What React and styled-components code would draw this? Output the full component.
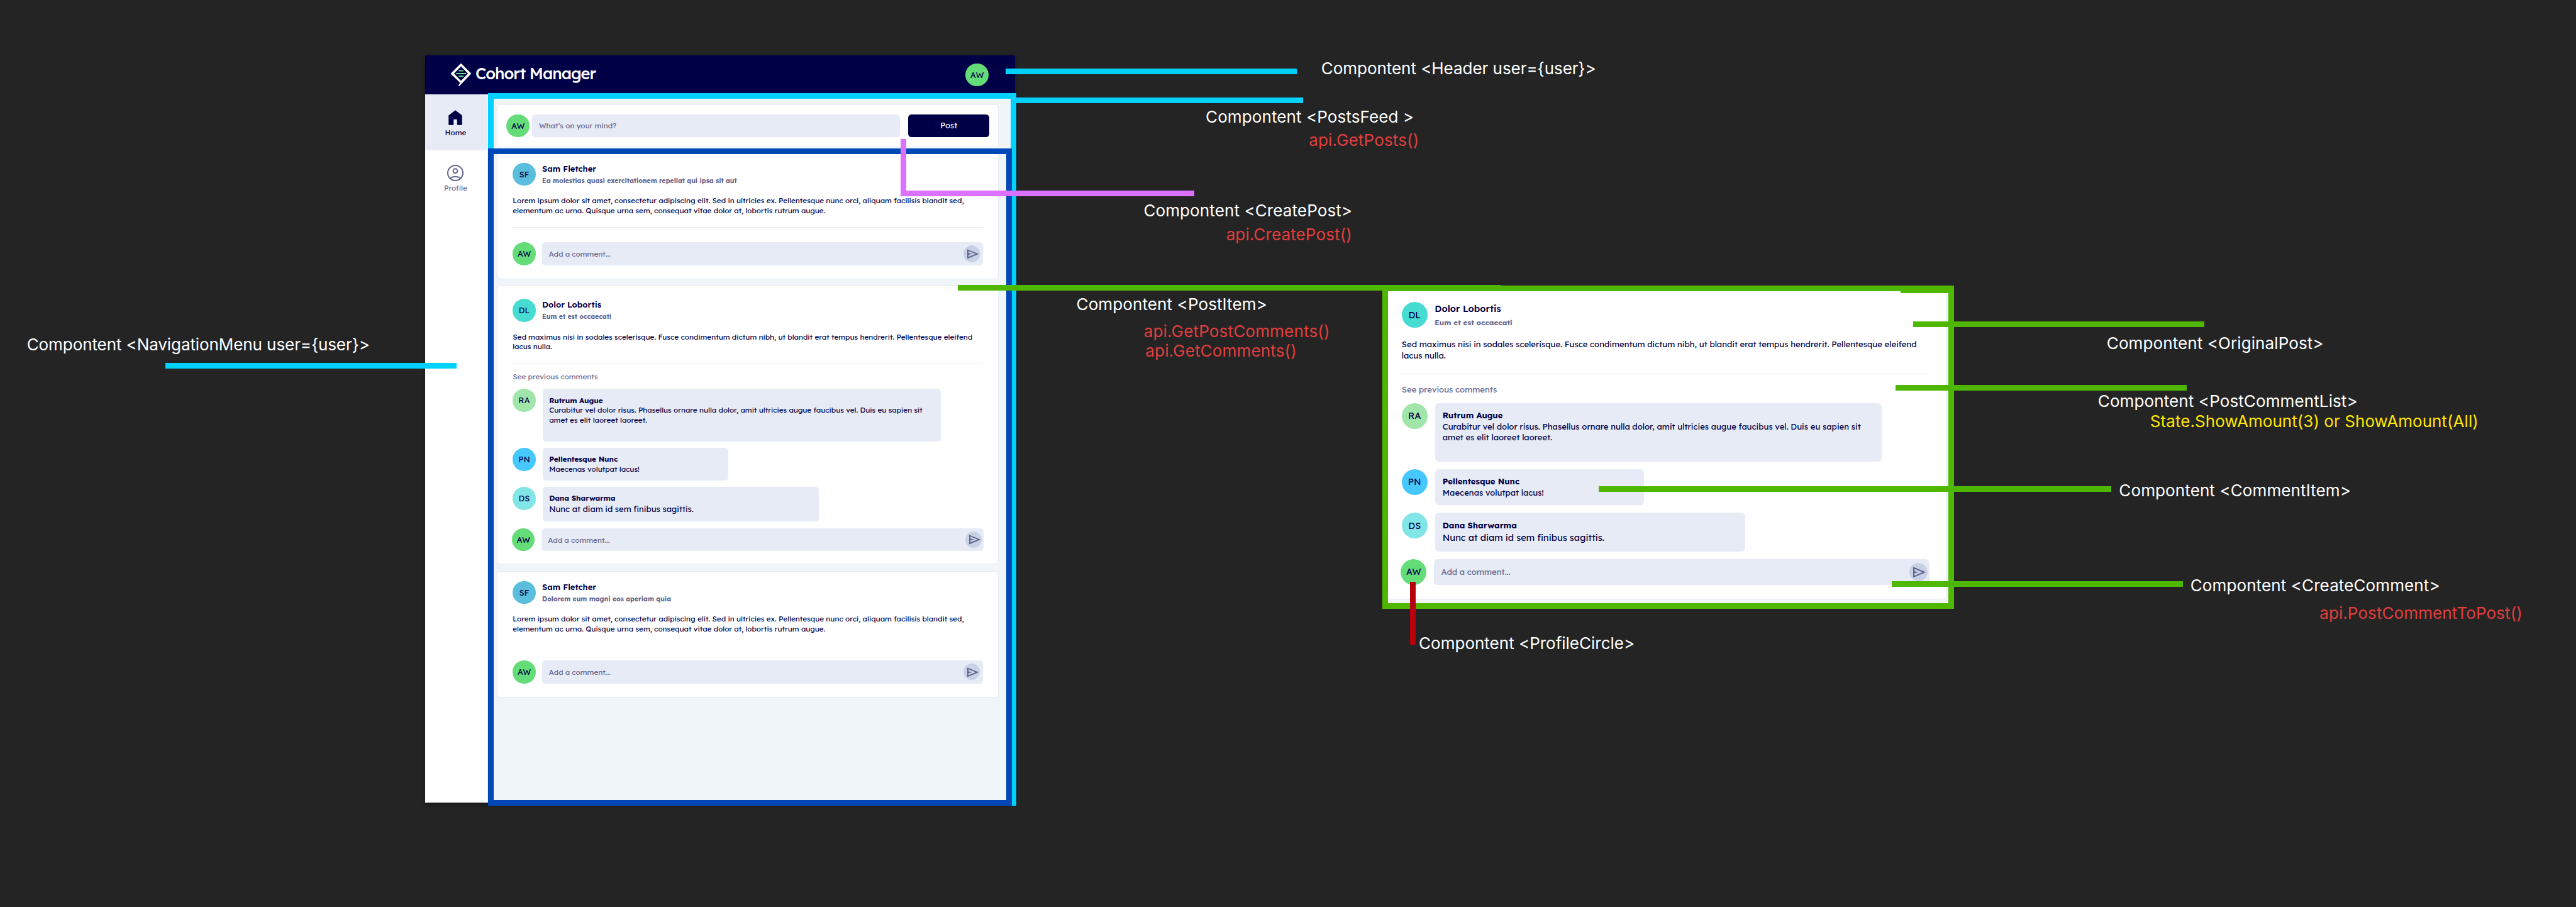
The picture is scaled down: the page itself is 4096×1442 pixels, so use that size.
import React from "react";
import styled, { createGlobalStyle } from "styled-components";

// One design unit; boards can override --u to show their content magnified.
const u = (n) => `calc(${n} * var(--u))`;

const color = {
  canvas: "#242424",
  navy: "#000046",
  muted: "#64648c",
  field: "#e6ebf5",
  feed: "#f0f5fa",
  send: "#c8d2e6",
  cyan: "#00d1ff",
  blue: "#0047b8",
  violet: "#db72ff",
  green: "#4fb700",
  crimson: "#b6000c",
  api: "#e23e3e",
  state: "#ffe500",
};

const people = {
  AW: "#64dc78",
  SF: "#5abedc",
  DL: "#46dcd2",
  RA: "#a0e6aa",
  PN: "#46c8ff",
  DS: "#82e6e6",
};

const GlobalStyle = createGlobalStyle`
  *, *::before, *::after { box-sizing: border-box; }
  html { --u: 0.6514px; }
  body { margin: 0; background: ${color.canvas}; }
  p, h1, h2 { margin: 0; }
`;

/* ---------- canvas ---------- */

const Canvas = styled.div`
  position: relative;
  width: 4096px;
  height: 1442px;
  overflow: hidden;
  background: ${color.canvas};
  color: ${color.navy};
  font-family: Lexend, Inter, "Open Sans", sans-serif;
`;

const AppFrame = styled.div`
  position: absolute;
  left: ${u(1037)};
  top: ${u(135)};
  width: ${u(1440)};
  height: ${u(1824)};
  display: flex;
  flex-direction: column;
  background: #fff;
  box-shadow: 0 ${u(4)} ${u(8)} rgba(0, 0, 0, 0.35);
`;

const Board = styled.div`
  position: absolute;
  left: ${u(3374)};
  top: ${u(697)};
  width: ${u(1395)};
  height: ${u(789)};
  overflow: hidden;
  background: ${color.feed};
`;

const Magnified = styled.div`
  --u: 0.73px;
  width: ${u(1225)};
  margin: 2.6px 0 0 3px;
`;

const Outline = styled.div`
  position: absolute;
  left: ${(p) => u(p.$x)};
  top: ${(p) => u(p.$y)};
  width: ${(p) => u(p.$w)};
  height: ${(p) => u(p.$h)};
  border: ${u(15)} solid ${(p) => p.$color};
`;

const Connector = styled.div`
  position: absolute;
  left: ${(p) => u(p.$x)};
  top: ${(p) => u(p.$y)};
  width: ${(p) => u(p.$w || 14)};
  height: ${(p) => u(p.$h || 14)};
  background: ${(p) => p.$color};
`;

const Label = styled.p`
  position: absolute;
  left: ${(p) => u(p.$x)};
  top: ${(p) => u(p.$baseline - 38.5)};
  font: 400 ${u(40)} / ${u(48)} Inter, sans-serif;
  letter-spacing: ${(p) => p.$track || 0}em;
  white-space: nowrap;
  color: ${(p) => p.$color || "#fff"};
`;

/* ---------- shared pieces ---------- */

const Circle = styled.span`
  flex: none;
  display: flex;
  align-items: center;
  justify-content: center;
  width: ${u(56)};
  height: ${u(56)};
  padding-top: ${u(1)};
  border-radius: 50%;
  background: ${(p) => p.$color};
  font-size: ${u(20)};
  line-height: 1;
`;

const ProfileCircle = ({ initials }) => (
  <Circle $color={people[initials]}>{initials}</Circle>
);

const Field = styled.div`
  flex: 1;
  display: flex;
  align-items: center;
  justify-content: space-between;
  height: ${u(56)};
  padding: 0 ${(p) => u(p.$inset ?? 8)} 0 ${u(16)};
  border-radius: ${u(8)};
  background: ${color.field};
  color: ${color.muted};
  font-size: ${u(18)};
  white-space: nowrap;
`;

const Card = styled.article`
  border: ${u(1)} solid ${color.field};
  border-radius: ${u(8)};
  background: #fff;
`;

/* ---------- header ---------- */

const HeaderBar = styled.header`
  flex: none;
  display: flex;
  align-items: center;
  justify-content: space-between;
  height: ${u(96)};
  padding: 0 ${u(64)};
  background: ${color.navy};
`;

const Brand = styled.div`
  display: flex;
  align-items: center;
  gap: ${u(10.5)};
`;

const BrandMark = styled.svg`
  width: ${u(49)};
  height: ${u(56)};
`;

const BrandName = styled.h1`
  padding-bottom: ${u(9)};
  color: #fff;
  font-size: ${u(39)};
  font-weight: 500;
  line-height: ${u(48)};
  letter-spacing: -0.04em;
  white-space: nowrap;
`;

const Header = () => (
  <HeaderBar>
    <Brand>
      <BrandMark viewBox="0 0 49 56">
        <path
          fill="#fff"
          fillRule="evenodd"
          d="M23.1.8Q24.6-.6 26.1.8L48.4 23.2Q49.6 24.6 48.4 26.2L19.6 56H18.3Q18.4 51.500 22.600 47.4L.7 26.200Q-.6 24.600 .7 23.200ZM24.6 6.800 7.600 24.600 24.600 42.300 41.600 24.600Z"
        />
        <g fill={people.AW}>
          <rect x="18.800" y="16" width="12.300" height="3.200" rx="1.600" />
          <rect x="12.500" y="22.900" width="25" height="3.300" rx="1.650" />
          <rect x="18.800" y="29.600" width="12.300" height="3.200" rx="1.600" />
        </g>
      </BrandMark>
      <BrandName>Cohort Manager</BrandName>
    </Brand>
    <ProfileCircle initials="AW" />
  </HeaderBar>
);

/* ---------- navigation ---------- */

const Columns = styled.div`
  flex: 1;
  display: flex;
  min-height: 0;
`;

const Nav = styled.nav`
  flex: none;
  width: ${u(152)};
  border-right: ${u(1)} solid ${color.field};
  background: #fff;
`;

const NavItem = styled.div`
  display: flex;
  flex-direction: column;
  align-items: center;
  gap: ${u(4)};
  height: ${u(136)};
  padding-top: ${u(36)};
  background: ${(p) => (p.$active ? color.field : "transparent")};
  color: ${(p) => (p.$active ? color.navy : color.muted)};
  font-size: ${u(18)};
  line-height: ${u(24)};
  letter-spacing: 0.005em;

  svg {
    width: ${u(40)};
    height: ${u(40)};
  }
`;

const NavigationMenu = () => (
  <Nav>
    <NavItem $active>
      <svg viewBox="0 0 40 40">
        <path fill="currentColor" d="M3.500 14.500 20 2 36.500 14.500V38H24.300V24H15.700V38H3.500Z" />
      </svg>
      Home
    </NavItem>
    <NavItem>
      <svg viewBox="0 0 40 40" fill="none" stroke="currentColor" strokeWidth="3">
        <circle cx="20" cy="20" r="18.500" />
        <circle cx="20" cy="15" r="5.300" />
        <path d="M6.500 33.500Q20 24 33.500 33.500" />
      </svg>
      Profile
    </NavItem>
  </Nav>
);

/* ---------- feed ---------- */

const Feed = styled.main`
  flex: 1;
  display: flex;
  flex-direction: column;
  padding: ${u(24)} ${u(39)} 0 ${u(24)};
  background: ${color.feed};
`;

const PostSlot = styled.div`
  margin-top: ${(p) => u(p.$gap)};
`;

const CreatePostCard = styled(Card)`
  display: flex;
  align-items: center;
  height: ${u(104)};
  padding: 0 ${u(21)} 0 ${u(22)};
`;

const PostField = styled(Field)`
  margin: 0 ${u(19)} 0 ${u(7)};
`;

const PostButton = styled.button`
  width: ${u(199)};
  height: ${u(56)};
  padding: 0;
  border: 0;
  border-radius: ${u(8)};
  background: ${color.navy};
  color: #fff;
  font: 400 ${u(20)} / 1 Lexend, Inter, sans-serif;
`;

const CreatePost = () => (
  <CreatePostCard>
    <ProfileCircle initials="AW" />
    <PostField>What’s on your mind?</PostField>
    <PostButton>Post</PostButton>
  </CreatePostCard>
);

/* ---------- post ---------- */

const PostCard = styled(Card)`
  padding: ${(p) => (p.$roomy ? `${u(31)} ${u(37)} ${u(30)}` : `${u(23)} ${u(37)} ${u(32)}`)};
`;

const PostHead = styled.header`
  display: flex;
  gap: ${u(16)};
  height: ${u(56)};
`;

const Author = styled.div`
  padding-top: ${u(2.5)};
  line-height: ${u(24)};
  white-space: nowrap;
`;

const AuthorName = styled.h2`
  font-size: ${u(20)};
  font-weight: 600;
  line-height: inherit;
  letter-spacing: 0.001em;
`;

const PostTitle = styled.p`
  margin-top: ${u(5.8)};
  color: ${color.muted};
  font-size: ${u(16)};
  font-weight: 700;
  letter-spacing: 0.001em;
`;

const Body = styled.p`
  width: max-content;
  margin-top: ${u(24.5)};
  font-size: ${u(18)};
  line-height: ${u(24)};
  white-space: pre-line;
`;

const Divider = styled.hr`
  height: ${u(1)};
  margin: ${u(28)} 0 0;
  border: 0;
  background: ${(p) => (p.$hidden ? "transparent" : color.field)};
`;

const OriginalPost = ({ post }) => (
  <>
    <PostHead>
      <ProfileCircle initials={post.initials} />
      <Author>
        <AuthorName>{post.name}</AuthorName>
        <PostTitle>{post.title}</PostTitle>
      </Author>
    </PostHead>
    <Body>{post.body}</Body>
    <Divider $hidden={post.plain} />
  </>
);

const SeePrevious = styled.p`
  margin: ${u(21)} 0 ${u(17.4)};
  color: ${color.muted};
  font-size: ${u(18)};
  line-height: ${u(24)};
`;

const CommentRow = styled.div`
  display: flex;
  gap: ${u(17)};
  margin-bottom: ${u(16)};
`;

const Bubble = styled.div`
  width: ${(p) => u(p.$w)};
  height: ${(p) => u(p.$h)};
  padding: ${u(15.6)} ${u(16)};
  border-radius: ${u(8)};
  background: ${color.field};
  font-size: ${u(18)};
  line-height: ${u(24)};
  white-space: pre;
`;

const Commenter = styled.p`
  font-weight: 700;
  letter-spacing: -0.003em;
`;

const CommentText = styled.p`
  font-size: ${(p) => u(p.$large ? 20 : 18)};
  line-height: ${(p) => u(p.$large ? 29 : 24)};
`;

const CommentItem = ({ comment: c }) => (
  <CommentRow>
    <ProfileCircle initials={c.initials} />
    <Bubble $w={c.w} $h={c.h}>
      <Commenter>{c.name}</Commenter>
      <CommentText $large={c.large}>{c.text}</CommentText>
    </Bubble>
  </CommentRow>
);

const Composer = styled.div`
  display: flex;
  gap: ${u(16)};
  margin: ${(p) => (p.$wide ? `0 ${u(-1)} 0 ${u(-2)}` : `${u(36.5)} 0 0`)};
`;

const SendButton = styled.span`
  display: flex;
  align-items: center;
  justify-content: flex-end;
  width: ${u(40)};
  height: ${u(40)};
  padding-right: ${u(3)};
  border-radius: 50%;
  background: ${color.send};

  svg {
    width: ${u(28)};
    height: ${u(24)};
  }
`;

const CreateComment = ({ wide }) => (
  <Composer $wide={wide}>
    <ProfileCircle initials="AW" />
    <Field $inset={wide ? 4 : 8}>
      Add a comment...
      <SendButton>
        <svg viewBox="3 4 19 16">
          <path
            fill={color.muted}
            fillRule="evenodd"
            d="M3 20V4L22 12ZM5 17 16.850 12 5 7V10.500L11 12 5 13.500Z"
          />
        </svg>
      </SendButton>
    </Field>
  </Composer>
);

const PostItem = ({ post }) => {
  const threaded = Boolean(post.comments);
  return (
    <PostCard $roomy={threaded}>
      <OriginalPost post={post} />
      {threaded && <SeePrevious>See previous comments</SeePrevious>}
      {threaded && post.comments.map((c) => <CommentItem key={c.initials} comment={c} />)}
      <CreateComment wide={threaded} />
    </PostCard>
  );
};

/* ---------- content ---------- */

const firstPost = {
  initials: "SF",
  name: "Sam Fletcher",
  title: "Ea molestias quasi exercitationem repellat qui ipsa sit aut",
  body: "Lorem ipsum dolor sit amet, consectetur adipiscing elit. Sed in ultricies ex. Pellentesque nunc orci, aliquam facilisis blandit sed,\nelementum ac urna. Quisque urna sem, consequat vitae dolor at, lobortis rutrum augue.",
};

const threadPost = {
  initials: "DL",
  name: "Dolor Lobortis",
  title: "Eum et est occaecati",
  body: "Sed maximus nisi in sodales scelerisque. Fusce condimentum dictum nibh, ut blandit erat tempus hendrerit. Pellentesque eleifend\nlacus nulla.",
  comments: [
    {
      initials: "RA",
      name: "Rutrum Augue",
      text: "Curabitur vel dolor risus. Phasellus ornare nulla dolor, amit ultricies augue faucibus vel. Duis eu sapien sit\namet es elit laoreet laoreet.",
      w: 972,
      h: 128,
    },
    {
      initials: "PN",
      name: "Pellentesque Nunc",
      text: "Maecenas volutpat lacus!",
      w: 454,
      h: 79,
    },
    {
      initials: "DS",
      name: "Dana Sharwarma",
      text: "Nunc at diam id sem finibus sagittis.",
      large: true,
      w: 675,
      h: 85,
    },
  ],
};

const lastPost = {
  ...firstPost,
  title: "Dolorem eum magni eos aperiam quia",
  plain: true,
};

const labels = [
  { x: 65.500, baseline: 855.500, track: -0.0042, text: "Compontent <NavigationMenu user={user}>" },
  { x: 3225, baseline: 181, track: -0.0025, text: "Compontent <Header user={user}>" },
  { x: 2943, baseline: 300, track: 0.0028, text: "Compontent <PostsFeed >" },
  { x: 3195, baseline: 355.700, track: 0.005, text: "api.GetPosts()", color: color.api },
  { x: 2791.500, baseline: 528.700, track: 0.0032, text: "Compontent <CreatePost>" },
  { x: 2993, baseline: 585.800, track: 0.004, text: "api.CreatePost()", color: color.api },
  { x: 2627.500, baseline: 757, track: 0.0032, text: "Compontent <PostItem>" },
  { x: 2792, baseline: 823, track: 0.006, text: "api.GetPostComments()", color: color.api },
  { x: 2796, baseline: 871, track: 0.005, text: "api.GetComments()", color: color.api },
  { x: 5142.500, baseline: 851.700, track: 0.0028, text: "Compontent <OriginalPost>" },
  { x: 5121, baseline: 993, track: 0.0032, text: "Compontent <PostCommentList>" },
  { x: 5248.500, baseline: 1042, track: 0.0012, text: "State.ShowAmount(3) or ShowAmount(All)", color: color.state },
  { x: 5172.500, baseline: 1212, track: 0.0032, text: "Compontent <CommentItem>" },
  { x: 5346.500, baseline: 1443, track: 0.0032, text: "Compontent <CreateComment>" },
  { x: 5662, baseline: 1511.400, track: 0.0025, text: "api.PostCommentToPost()", color: color.api },
  { x: 3463.500, baseline: 1585, track: -0.001, text: "Compontent <ProfileCircle>" },
];

const connectors = [
  { x: 403, y: 886, w: 711, color: color.cyan },
  { x: 2454, y: 167, w: 711, color: color.cyan },
  { x: 2470, y: 238, w: 711, color: color.cyan },
  { x: 2198, y: 339, h: 140, color: color.violet },
  { x: 2198, y: 465, w: 718, color: color.violet },
  { x: 2338, y: 695, w: 1325, color: color.green },
  { x: 4640, y: 702, w: 120, color: color.green },
  { x: 4670, y: 784, w: 711, color: color.green },
  { x: 4627, y: 940, w: 711, color: color.green },
  { x: 3902, y: 1187, w: 1252, color: color.green },
  { x: 4617, y: 1418, w: 711, color: color.green },
  { x: 3442, y: 1420, h: 153, color: color.crimson },
];

export default function App() {
  return (
    <Canvas>
      <GlobalStyle />
      <AppFrame>
        <Header />
        <Columns>
          <NavigationMenu />
          <Feed>
            <CreatePost />
            <PostSlot $gap={14}>
              <PostItem post={firstPost} />
            </PostSlot>
            <PostSlot $gap={16}>
              <PostItem post={threadPost} />
            </PostSlot>
            <PostSlot $gap={17}>
              <PostItem post={lastPost} />
            </PostSlot>
          </Feed>
        </Columns>
      </AppFrame>

      <Board>
        <Magnified>
          <PostItem post={threadPost} />
        </Magnified>
      </Board>

      <Outline $x={1192} $y={227} $w={1289} $h={1740} $color={color.cyan} />
      <Outline $x={1192} $y={363} $w={1278} $h={1604} $color={color.blue} />
      <Outline $x={3374} $y={697} $w={1395} $h={789} $color={color.green} />

      {connectors.map((c, i) => (
        <Connector key={i} $x={c.x} $y={c.y} $w={c.w} $h={c.h} $color={c.color} />
      ))}
      {labels.map((l) => (
        <Label key={l.text} $x={l.x} $baseline={l.baseline} $track={l.track} $color={l.color}>
          {l.text}
        </Label>
      ))}
    </Canvas>
  );
}
